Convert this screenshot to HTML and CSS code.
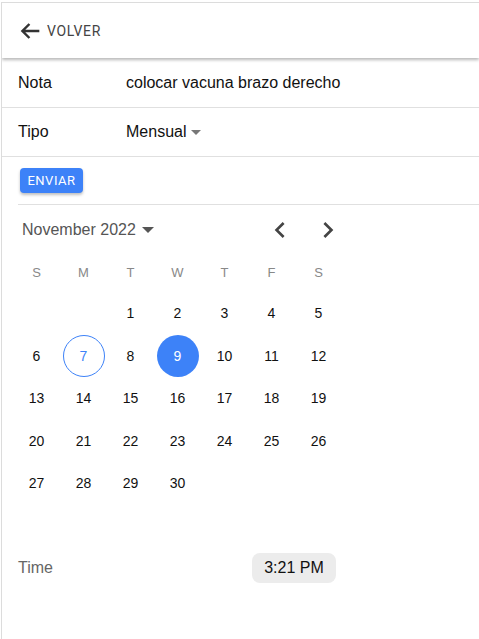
FILE: index.html
```html
<!DOCTYPE html>
<html lang="es">
<head>
<meta charset="utf-8">
<link rel="stylesheet" href="styles.css">
</head>
<body>
<div class="frame">
  <header class="topbar">
    <button class="back">
      <svg class="back-icon" viewBox="0 0 24 24" width="28" height="28"><path d="M20 12H5.5M11.5 6l-6 6 6 6" fill="none" stroke="#333" stroke-width="2.1"/></svg>
      <span>VOLVER</span>
    </button>
  </header>
  <div class="row">
    <span class="label">Nota</span>
    <span class="value">colocar vacuna brazo derecho</span>
  </div>
  <div class="row">
    <span class="label">Tipo</span>
    <span class="value select">Mensual <svg class="caret" viewBox="0 0 10 5" width="10" height="5"><path d="M0 0h10L5 5z" fill="#777"/></svg></span>
  </div>
  <div class="actions">
    <button class="send">ENVIAR</button>
  </div>
  <div class="calendar">
    <div class="cal-head">
      <div class="month">November 2022 <svg class="month-caret" viewBox="0 0 12 6" width="12" height="6"><path d="M0 0h12L6 6z" fill="#555"/></svg></div>
      <div class="nav">
        <svg class="chev" viewBox="0 0 24 24" width="32" height="32"><path d="M15.41 7.41 14 6l-6 6 6 6 1.41-1.41L10.83 12z" fill="#444"/></svg>
        <svg class="chev" viewBox="0 0 24 24" width="32" height="32"><path d="M10 6 8.59 7.41 13.17 12l-4.58 4.59L10 18l6-6z" fill="#444"/></svg>
      </div>
    </div>
    <div class="grid week">
      <span>S</span><span>M</span><span>T</span><span>W</span><span>T</span><span>F</span><span>S</span>
    </div>
    <div class="grid days">
      <span></span><span></span><span>1</span><span>2</span><span>3</span><span>4</span><span>5</span>
      <span>6</span><span class="today">7</span><span>8</span><span class="selected">9</span><span>10</span><span>11</span><span>12</span>
      <span>13</span><span>14</span><span>15</span><span>16</span><span>17</span><span>18</span><span>19</span>
      <span>20</span><span>21</span><span>22</span><span>23</span><span>24</span><span>25</span><span>26</span>
      <span>27</span><span>28</span><span>29</span><span>30</span><span></span><span></span><span></span>
    </div>
  </div>
  <div class="time-row">
    <span class="time-label">Time</span>
    <span class="time-pill">3:21 PM</span>
  </div>
</div>
</body>
</html>
```

FILE: styles.css
```css
html, body {
  margin: 0;
  padding: 0;
  background: #fff;
}
body {
  font-family: "Liberation Sans", Arial, sans-serif;
  color: #111;
}
.frame {
  margin: 2px 0 0 1px;
  border-top: 1px solid #dcdcdc;
  border-left: 1px solid #dcdcdc;
  min-height: 640px;
  overflow: hidden;
}
.topbar {
  height: 55px;
  display: flex;
  align-items: center;
  padding-left: 14px;
  box-shadow: 0 2px 3px rgba(0,0,0,0.28);
  position: relative;
  background: #fff;
}
.back {
  display: flex;
  align-items: center;
  gap: 3px;
  border: 0;
  background: none;
  padding: 0;
  font-family: Roboto, sans-serif;
  font-size: 14px;
  letter-spacing: 0.6px;
  color: #444;
}
.back-icon { display: block; }
.row {
  height: 48px;
  display: flex;
  align-items: center;
  border-bottom: 1px solid #e0e0e0;
  font-size: 16px;
}
.row:first-of-type { height: 49px; }
.label {
  width: 124px;
  padding-left: 16px;
  box-sizing: border-box;
  color: #111;
}
.value { color: #111; }
.select {
  display: inline-flex;
  align-items: center;
  gap: 5px;
}
.caret { display: block; margin-top: 1px; }
.actions {
  padding: 11px 0 11px 2px;
  border-bottom: 1px solid #e0e0e0;
  margin-left: 16px;
}
.send {
  display: block;
  height: 25px;
  width: 63px;
  border: 0;
  border-radius: 4px;
  background: #3d82f8;
  color: #fff;
  font-family: Roboto, sans-serif;
  font-size: 13px;
  letter-spacing: 0.5px;
  padding: 0;
  box-shadow: 0 2px 3px rgba(0,0,0,0.25);
}
.calendar {
  padding-left: 11px;
  width: 329px;
}
.cal-head {
  height: 46px;
  padding-top: 1px;
  display: flex;
  align-items: center;
  justify-content: space-between;
}
.month {
  display: flex;
  align-items: center;
  gap: 6px;
  padding-left: 9px;
  padding-top: 1px;
  font-size: 16px;
  color: #555;
}
.month-caret { display: block; }
.nav {
  display: flex;
  gap: 16px;
  padding-top: 1px;
  margin-right: -2px;
}
.chev { display: block; }
.grid {
  display: grid;
  grid-template-columns: repeat(7, 47px);
  text-align: center;
}
.week {
  height: 40px;
  align-items: center;
  font-size: 13px;
  color: #888;
}
.days {
  grid-auto-rows: 42.5px;
  align-items: center;
  justify-items: center;
  font-size: 14px;
  color: #111;
}
.days span {
  width: 42px;
  height: 42px;
  display: flex;
  align-items: center;
  justify-content: center;
  border-radius: 50%;
  box-sizing: border-box;
}
.days .today {
  border: 1px solid #3d82f8;
  color: #3d82f8;
}
.days .selected {
  background: #3d82f8;
  color: #fff;
}
.time-row {
  display: flex;
  align-items: center;
  height: 30px;
  margin-top: 48px;
  padding-left: 16px;
}
.time-label {
  width: 234px;
  font-size: 16px;
  color: #666;
}
.time-pill {
  width: 84px;
  height: 30px;
  display: flex;
  align-items: center;
  justify-content: center;
  background: #ececec;
  border-radius: 8px;
  font-size: 16px;
  color: #111;
}
```
